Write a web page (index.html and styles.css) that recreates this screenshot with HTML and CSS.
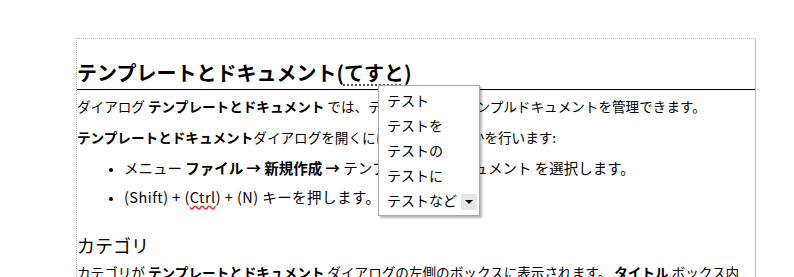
FILE: index.html
```html
<!DOCTYPE html>
<html lang="ja">
<head>
<meta charset="utf-8">
<link rel="stylesheet" href="styles.css">
</head>
<body>
<div class="page">
  <h1 class="title">テンプレートとドキュメント(<span class="dotted">てすと</span>)</h1>
  <p class="para">ダイアログ <b>テンプレートとドキュメント</b> では、テンプレートとサンプルドキュメントを管理できます。</p>
  <p class="para"><b>テンプレートとドキュメント</b>ダイアログを開くには、次のいずれかを行います:</p>
  <ul class="list">
    <li>メニュー <b>ファイル → 新規作成 →</b> テンプレートとドキュメント を選択します。</li>
    <li class="keys">(Shift) + (<span class="spell">Ctrl</span>) + (N) キーを押します。</li>
  </ul>
  <h2 class="sub">カテゴリ</h2>
  <p class="para">カテゴリが <b>テンプレートとドキュメント</b> ダイアログの左側のボックスに表示されます。 <b>タイトル</b> ボックス内</p>
</div>
<div class="popup">
  <div class="item">テスト</div>
  <div class="item">テストを</div>
  <div class="item">テストの</div>
  <div class="item">テストに</div>
  <div class="item">テストなど</div>
  <div class="more"><span class="tri"></span></div>
</div>
</body>
</html>
```
FILE: styles.css
```css
html, body {
  margin: 0;
  padding: 0;
  background: #fff;
  overflow: hidden;
}
body {
  font-family: "Noto Sans CJK JP", "Noto Sans", sans-serif;
  color: #000;
  height: 277px;
}
.page {
  margin: 38px 0 0 76px;
  width: 678px;
  height: 300px;
  border-top: 1px dotted #b8b8b8;
  border-left: 1px dotted #b8b8b8;
  border-right: 1px solid #c0c0c0;
}
.title {
  margin: 0;
  padding: 18px 0 1px;
  font-size: 20px;
  line-height: 31px;
  font-weight: bold;
  border-bottom: 1px solid #000;
}
.dotted {
  text-decoration: underline dotted #555;
  text-underline-offset: 3px;
}
.para {
  margin: 5px 0 9px;
  font-size: 13.6px;
  line-height: 22px;
  white-space: nowrap;
}
.para b { font-weight: bold; }
.list {
  margin: 0;
  padding-left: 47px;
  font-size: 14.5px;
  line-height: 22px;
}
.list li {
  margin-bottom: 7px;
}
.list li::marker {
  font-size: 11px;
}
.keys {
  letter-spacing: 0.45px;
}
.spell {
  text-decoration: underline wavy #e03030;
  text-underline-offset: 2px;
}
.sub {
  margin: 25px 0 0;
  font-size: 18px;
  line-height: 24px;
  font-weight: normal;
}
.sub + .para { margin-top: 4px; }
.popup {
  position: absolute;
  left: 378px;
  top: 85px;
  width: 100px;
  height: 127px;
  background: #fff;
  border: 1px solid #a8a8a8;
  box-shadow: 2px 2px 2px rgba(0,0,0,0.28);
  padding-top: 2px;
  box-sizing: content-box;
}
.item {
  padding-left: 8px;
  font-size: 14px;
  line-height: 25px;
  height: 25px;
}
.more {
  position: absolute;
  left: 82px;
  top: 108px;
  width: 16px;
  height: 16px;
  background: #e6e6e6;
  display: flex;
  align-items: center;
  justify-content: center;
}
.tri {
  width: 0;
  height: 0;
  border-left: 4px solid transparent;
  border-right: 4px solid transparent;
  border-top: 4px solid #000;
}
```
